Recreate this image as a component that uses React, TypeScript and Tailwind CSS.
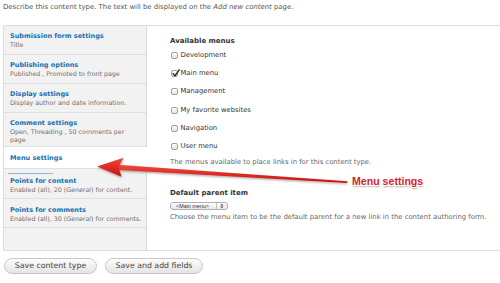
import React from "react";

const font = "font-['DejaVu_Sans',sans-serif]";

function Tab({
  title,
  desc,
  selected,
  pad,
  bar,
}: {
  title: string;
  desc?: React.ReactNode;
  selected?: boolean;
  pad: string;
  bar?: boolean;
}) {
  return (
    <div
      className={
        "border-b border-b-[#e0e0e0] border-r pl-[6px] pr-[4px] " +
        pad +
        (selected ? " bg-white border-r-white" : " bg-[#f2f2f2] border-r-[#dcdcdc]")
      }
    >
      {bar && <div className="h-[1.5px] w-[45px] ml-[-2px] mb-[2.5px] bg-[#8fb5d9] rounded-full" />}
      <div className="text-[6.5px] leading-[9px] font-bold text-[#1670b0] whitespace-nowrap">{title}</div>
      {desc && <div className="text-[6.3px] leading-[8px] text-[#707070] whitespace-nowrap">{desc}</div>}
    </div>
  );
}

function Check({ label, checked }: { label: string; checked?: boolean }) {
  return (
    <div className="h-[18.3px] flex items-center">
      <span className="relative w-[7px] h-[7px] ml-[1px] rounded-[2px] border border-[#a0a0a0] bg-linear-to-b from-white to-[#e4e4e4] shrink-0">
        {checked && (
          <svg className="absolute left-[-0.5px] top-[-2px]" width="8" height="8" viewBox="0 0 8 8">
            <path d="M1.2 4.6 L3 6.8 L7.2 0.8" fill="none" stroke="#222" strokeWidth="1.3" strokeLinecap="round" strokeLinejoin="round" />
          </svg>
        )}
      </span>
      <span className="ml-[2.5px] text-[6.8px] leading-[9px] text-[#333]">{label}</span>
    </div>
  );
}

export default function App() {
  return (
    <div className={"relative w-[500px] h-[283px] overflow-hidden bg-white " + font}>
      <div className="pt-[3px] pl-[3px] text-[6.9px] leading-[9px] text-[#555] whitespace-nowrap">
        Describe this content type. The text will be displayed on the <em>Add new content</em> page.
      </div>
      <div className="mt-[13px] ml-[3px] h-[226px] flex border-y border-l border-[#dedede]">
        <div className="w-[143px] flex flex-col">
          <Tab pad="pt-[5.5px] pb-[5.5px]" title="Submission form settings" desc="Title" />
          <Tab pad="pt-[5.5px] pb-[5.5px]" title="Publishing options" desc="Published , Promoted to front page" />
          <Tab pad="pt-[5.5px] pb-[5.5px]" title="Display settings" desc="Display author and date information." />
          <Tab
            pad="pt-[5.5px] pb-[2.5px]"
            title="Comment settings"
            desc={
              <>
                Open, Threading , 50 comments per
                <br />
                page
              </>
            }
          />
          <Tab pad="pt-[6.5px] pb-[5.5px]" title="Menu settings" selected />
          <Tab
            pad="pt-[3.5px] pb-[4.5px]"
            bar
            title="Points for content"
            desc={
              <>
                Enabled (all), 20 (<em>General</em>) for content.
              </>
            }
          />
          <Tab
            pad="pt-[6.5px] pb-[4.5px]"
            title="Points for comments"
            desc={
              <>
                Enabled (all), 30 (<em>General</em>) for comments.
              </>
            }
          />
          <div className="flex-1 bg-[#f2f2f2] border-r border-r-[#dcdcdc]" />
        </div>
        <div className="flex-1 pl-[23px] pt-[10px]">
          <div className="text-[7px] leading-[10px] font-bold text-[#333]">Available menus</div>
          <div className="flex flex-col">
            <Check label="Development" />
            <Check label="Main menu" checked />
            <Check label="Management" />
            <Check label="My favorite websites" />
            <Check label="Navigation" />
            <Check label="User menu" />
          </div>
          <div className="mt-[2.7px] text-[6.85px] leading-[9px] text-[#666] whitespace-nowrap">
            The menus available to place links in for this content type.
          </div>
          <div className="mt-[20.5px] text-[7px] leading-[10px] font-bold text-[#333]">Default parent item</div>
          <div className="mt-[4px] w-[58px] h-[8px] rounded-[3px] border border-[#b0b0b0] bg-linear-to-b from-white to-[#e6e6e6] flex items-center">
            <span className="pl-[5px] text-[5.4px] leading-[6px] text-[#333] font-['Liberation_Sans',sans-serif] w-[46px]">
              &lt;Main menu&gt;
            </span>
            <span className="h-full border-l border-[#c4c4c4]" />
            <svg width="10" height="6" viewBox="0 0 10 6">
              <path d="M5 0.6 L6.6 2.5 L3.4 2.5 Z M5 5.4 L6.6 3.5 L3.4 3.5 Z" fill="#444" />
            </svg>
          </div>
          <div className="mt-[3.5px] text-[6.85px] leading-[9px] text-[#666] whitespace-nowrap">
            Choose the menu item to be the default parent for a new link in the content authoring form.
          </div>
        </div>
      </div>
      <div className="mt-[7px] ml-[4px] flex gap-[8px]">
        <button className="w-[93px] h-[16px] rounded-full border border-[#c8c8c8] bg-linear-to-b from-[#fdfdfd] to-[#e4e4e4] text-[7.8px] leading-[10px] text-[#444]">
          Save content type
        </button>
        <button className="w-[98px] h-[16px] rounded-full border border-[#c8c8c8] bg-linear-to-b from-[#fdfdfd] to-[#e4e4e4] text-[7.8px] leading-[10px] text-[#444]">
          Save and add fields
        </button>
      </div>

      <svg className="absolute left-0 top-0 pointer-events-none" width="500" height="283" viewBox="0 0 500 283">
        <defs>
          <linearGradient id="rg" x1="0" y1="0" x2="0" y2="1">
            <stop offset="0" stopColor="#f04a3c" />
            <stop offset="1" stopColor="#c8100f" />
          </linearGradient>
          <filter id="sh" x="-10%" y="-50%" width="120%" height="200%">
            <feDropShadow dx="0.5" dy="1.2" stdDeviation="1" floodColor="#000" floodOpacity="0.35" />
          </filter>
        </defs>
        <g filter="url(#sh)" fill="url(#rg)">
          <path d="M114 164.4 L347 181.2 L347 183 L114 169.8 Z" />
          <path d="M97 166.6 L123.5 157.8 L118.5 167.3 L121.5 176.8 Z" />
        </g>
      </svg>
      <div className="absolute left-[352px] top-[175px] text-[10.6px] leading-[13px] font-bold text-[#d8232a] font-['Liberation_Sans',sans-serif] [text-shadow:-1px_-1px_0_#fff,1px_-1px_0_#fff,-1px_1px_0_#fff,1px_1px_0_#fff,0_0_1px_#fff,0.5px_1.5px_2px_rgba(0,0,0,0.45)]">
        Menu settings
      </div>
    </div>
  );
}
